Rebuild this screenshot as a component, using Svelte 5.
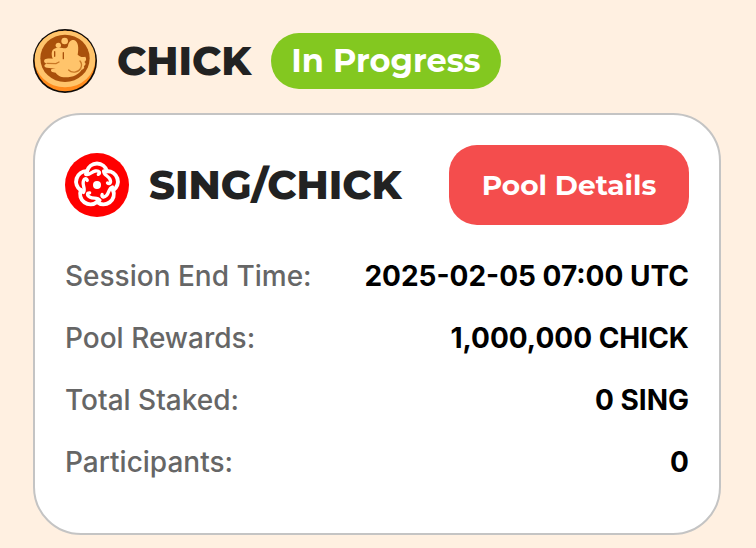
<script lang="ts">
  const poolInfo = [
    { label: "Session End Time:", value: "2025-02-05 07:00 UTC" },
    { label: "Pool Rewards:", value: "1,000,000 CHICK" },
    { label: "Total Staked:", value: "0 SING" },
    { label: "Participants:", value: "0" },
  ];

  const petals = [0, 72, 144, 216, 288];
</script>

<main class="pool">
  <header class="pool-header">
    <svg class="token" viewBox="24 27 192 192" aria-hidden="true">
      <circle cx="120" cy="123" r="96" fill="#100b08" />
      <circle cx="120" cy="123" r="91" fill="#ff8a1c" />
      <ellipse cx="120" cy="117" rx="91" ry="85" fill="#ffc46b" />
      <ellipse cx="120" cy="115" rx="74" ry="71" fill="#a9500b" />
      <path
        d="M83 90C90 82 102 82 112 84C122 86 127 84 129 77C131 66 137 58 147 60C160 64 162 84 158 104C166 112 173 112 181 110C185 116 184 122 178 126C184 130 182 136 176 138C180 143 176 148 170 149C163 162 144 172 122 172C104 172 96 164 92 158L82 156C78 154 76 150 80 147L92 146L66 143C56 141 56 134 64 131L58 127C55 116 64 115 83 116C79 106 79 97 83 90Z"
        fill="#ffc46b"
      />
      <circle cx="100" cy="76" r="8" fill="#ffc46b" />
      <circle cx="119" cy="63" r="10" fill="#ffc46b" />
      <path
        d="M89 95v14M115 98v18"
        fill="none"
        stroke="#a9500b"
        stroke-width="4"
        stroke-linecap="round"
      />
      <path
        d="M66 130l27 1 9-5M131 150c9 10 29 8 36-5 4-8 3-16-2-22"
        fill="none"
        stroke="#c97725"
        stroke-width="4"
        stroke-linecap="round"
      />
    </svg>
    <h1>CHICK</h1>
    <span class="status">In Progress</span>
  </header>

  <section class="card">
    <div class="card-header">
      <svg class="token" viewBox="24 24 192 192" aria-hidden="true">
        <circle cx="120" cy="120" r="96" fill="#f00" />
        <circle cx="120" cy="120" r="12" fill="#fff" />
        {#each petals as angle}
          <path
            d="M90 79A31 31 0 0 1 150 79"
            transform="rotate({angle} 120 120)"
            fill="none"
            stroke="#fff"
            stroke-width="12"
            stroke-linecap="round"
          />
          <path
            d="M86 88C98 92 103 80 115 78C127 76 131 84 124 88"
            transform="rotate({angle} 120 120)"
            fill="none"
            stroke="#fff"
            stroke-width="10"
            stroke-linecap="round"
          />
        {/each}
      </svg>
      <h2>SING/CHICK</h2>
      <button type="button">Pool Details</button>
    </div>

    <dl>
      {#each poolInfo as { label, value }}
        <div class="row">
          <dt>{label}</dt>
          <dd>{value}</dd>
        </div>
      {/each}
    </dl>
  </section>
</main>

<style>
  :global(body) {
    margin: 0;
    background: #fff0e1;
  }

  .pool {
    padding: 29px 35px 13px 33px;
    font-family: Inter, sans-serif;
    color: #000;
  }

  .pool-header,
  .card-header {
    display: flex;
    align-items: center;
    gap: 20px;
  }

  .pool-header {
    margin-bottom: 20px;
  }

  .token {
    width: 64px;
    height: 64px;
    flex-shrink: 0;
  }

  h1,
  h2 {
    margin: 0;
    font-family: Montserrat, Inter, sans-serif;
    font-size: 40px;
    font-weight: 800;
    line-height: 48px;
    color: #222;
  }

  .status {
    padding: 0 20px;
    border-radius: 28px;
    background: #83c820;
    color: #fff;
    font-family: Montserrat, Inter, sans-serif;
    font-size: 32px;
    font-weight: 700;
    line-height: 56px;
  }

  .card {
    padding: 30px 30px 54px;
    border: 2px solid #c4c4c4;
    border-radius: 48px;
    background: #fff;
  }

  button {
    min-width: 240px;
    height: 80px;
    margin-left: auto;
    padding: 0 32px;
    border: none;
    border-radius: 28px;
    background: #f44d4d;
    color: #fff;
    font-family: Montserrat, Inter, sans-serif;
    font-size: 28px;
    font-weight: 700;
    cursor: pointer;
  }

  dl {
    display: grid;
    gap: 28px;
    margin: 34px 0 0;
  }

  .row {
    display: flex;
    justify-content: space-between;
    font-size: 28px;
    line-height: 34px;
  }

  dt {
    color: #666;
    font-weight: 500;
  }

  dd {
    margin: 0;
    font-weight: 700;
  }
</style>
